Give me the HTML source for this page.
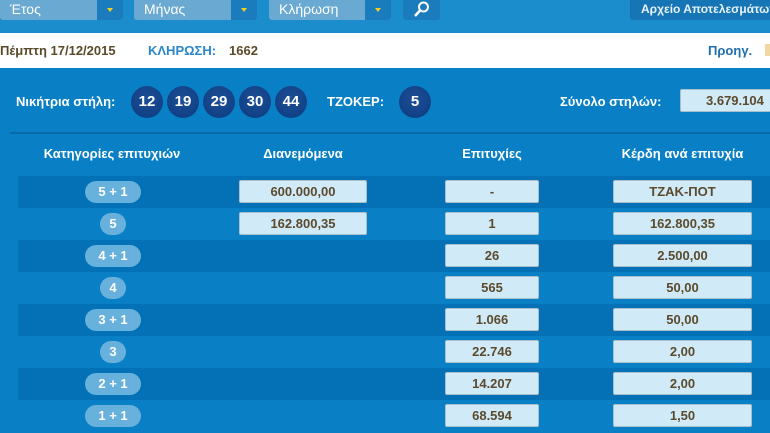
<!DOCTYPE html>
<html><head><meta charset="utf-8"><style>
*{margin:0;padding:0;box-sizing:border-box}
body{width:770px;height:433px;overflow:hidden;background:#0980c5;font-family:"Liberation Sans",sans-serif;position:relative}
.a{position:absolute;white-space:nowrap}
.top{left:0;top:0;width:770px;height:33px;background:#1b8dcc}
.dd{top:0;height:20px;background:#6aa9d2;color:#fff;font-size:14px;padding:1px 0 0 10px;border-radius:0 0 3px 3px}
.dd .ar{position:absolute;right:0;top:0;width:26px;height:20px;background:#1a7cbd;border-radius:0 0 3px 0}
.dd .ar:after{content:"";position:absolute;left:10px;top:8px;border:3px solid transparent;border-top:4px solid #f0d020}
.white{left:0;top:33px;width:770px;height:35px;background:#fff}
.b{font-weight:bold}
.ball{width:32px;height:32px;border-radius:50%;background:radial-gradient(circle at 50% 40%,#1d4f96,#0c3a7e);color:#fff;font-weight:bold;font-size:15px;text-align:center;line-height:32px;top:86px}
.row{left:18px;width:752px;height:32px}
.dark{background:#0470b6}
.pill{height:22px;background:#68b1dd;color:#fff;font-weight:bold;font-size:13px;text-align:center;line-height:22px;border-radius:11px}
.box{height:23px;background:#d0eaf8;border:1px solid #a9bfcc;border-radius:2px;color:#5b4a2c;font-weight:bold;font-size:13px;text-align:center;line-height:21px}
.h{color:#fff;font-weight:bold;font-size:13px;top:146px;text-align:center}
</style></head><body>
<div class="a top"></div>
<div class="a dd" style="left:0;width:123px">Έτος<div class="ar"></div></div>
<div class="a dd" style="left:134px;width:123px">Μήνας<div class="ar"></div></div>
<div class="a dd" style="left:269px;width:122px">Κλήρωση<div class="ar"></div></div>
<div class="a" style="left:403px;top:0;width:37px;height:20px;background:#1a7cbd;border-radius:0 0 3px 3px">
<svg width="37" height="20"><circle cx="20.5" cy="7" r="4.5" fill="none" stroke="#fff" stroke-width="2"/><line x1="17" y1="10.5" x2="12" y2="16" stroke="#fff" stroke-width="2.5"/></svg></div>
<div class="a" style="left:630px;top:0;width:140px;height:20px;background:#1675b4;color:#e8f2fa;font-size:12px;font-weight:bold;padding:2px 0 0 11px;border-radius:0 0 0 3px;overflow:hidden">Αρχείο Αποτελεσμάτων</div>
<div class="a white"></div>
<div class="a b" style="left:0;top:43px;font-size:13px;color:#5a4a2a">Πέμπτη 17/12/2015</div>
<div class="a b" style="left:148px;top:43px;font-size:13px;color:#2a86c8">ΚΛΗΡΩΣΗ:</div>
<div class="a b" style="left:229px;top:43px;font-size:13px;color:#5a4a2a">1662</div>
<div class="a b" style="left:708px;top:43px;font-size:13px;color:#1f6fb0">Προηγ.</div>
<div class="a" style="left:765px;top:44px;width:5px;height:12px;background:#f0d8a0"></div>
<div class="a b" style="left:16px;top:94px;font-size:13px;color:#fff">Νικήτρια στήλη:</div>
<div class="a ball" style="left:131px">12</div>
<div class="a ball" style="left:167px">19</div>
<div class="a ball" style="left:203px">29</div>
<div class="a ball" style="left:239px">30</div>
<div class="a ball" style="left:275px">44</div>
<div class="a b" style="left:327px;top:94px;font-size:13px;color:#fff">ΤΖΟΚΕΡ:</div>
<div class="a ball" style="left:399px">5</div>
<div class="a b" style="left:560px;top:94px;font-size:13px;color:#fff">Σύνολο στηλών:</div>
<div class="a box" style="left:680px;top:89px;width:100px;text-align:left;padding-left:25px">3.679.104</div>
<div class="a" style="left:10px;top:132px;width:760px;height:2px;background:#0a6aa8"></div>
<div class="a h" style="left:18px;width:188px">Κατηγορίες επιτυχιών</div>
<div class="a h" style="left:239px;width:128px">Διανεμόμενα</div>
<div class="a h" style="left:445px;width:94px">Επιτυχίες</div>
<div class="a h" style="left:613px;width:139px">Κέρδη ανά επιτυχία</div>

<div class="a row dark" style="top:176px"></div>
<div class="a row dark" style="top:240px"></div>
<div class="a row dark" style="top:304px"></div>
<div class="a row dark" style="top:368px"></div>

<div class="a pill" style="left:85px;top:181px;width:56px">5 + 1</div>
<div class="a pill" style="left:100px;top:213px;width:26px">5</div>
<div class="a pill" style="left:85px;top:245px;width:56px">4 + 1</div>
<div class="a pill" style="left:100px;top:277px;width:26px">4</div>
<div class="a pill" style="left:85px;top:309px;width:56px">3 + 1</div>
<div class="a pill" style="left:100px;top:341px;width:26px">3</div>
<div class="a pill" style="left:85px;top:373px;width:56px">2 + 1</div>
<div class="a pill" style="left:85px;top:405px;width:56px">1 + 1</div>

<div class="a box" style="left:239px;top:180px;width:128px">600.000,00</div>
<div class="a box" style="left:239px;top:212px;width:128px">162.800,35</div>

<div class="a box" style="left:445px;top:180px;width:94px">-</div>
<div class="a box" style="left:445px;top:212px;width:94px">1</div>
<div class="a box" style="left:445px;top:244px;width:94px">26</div>
<div class="a box" style="left:445px;top:276px;width:94px">565</div>
<div class="a box" style="left:445px;top:308px;width:94px">1.066</div>
<div class="a box" style="left:445px;top:340px;width:94px">22.746</div>
<div class="a box" style="left:445px;top:372px;width:94px">14.207</div>
<div class="a box" style="left:445px;top:404px;width:94px">68.594</div>

<div class="a box" style="left:613px;top:180px;width:139px">ΤΖΑΚ-ΠΟΤ</div>
<div class="a box" style="left:613px;top:212px;width:139px">162.800,35</div>
<div class="a box" style="left:613px;top:244px;width:139px">2.500,00</div>
<div class="a box" style="left:613px;top:276px;width:139px">50,00</div>
<div class="a box" style="left:613px;top:308px;width:139px">50,00</div>
<div class="a box" style="left:613px;top:340px;width:139px">2,00</div>
<div class="a box" style="left:613px;top:372px;width:139px">2,00</div>
<div class="a box" style="left:613px;top:404px;width:139px">1,50</div>
</body></html>
